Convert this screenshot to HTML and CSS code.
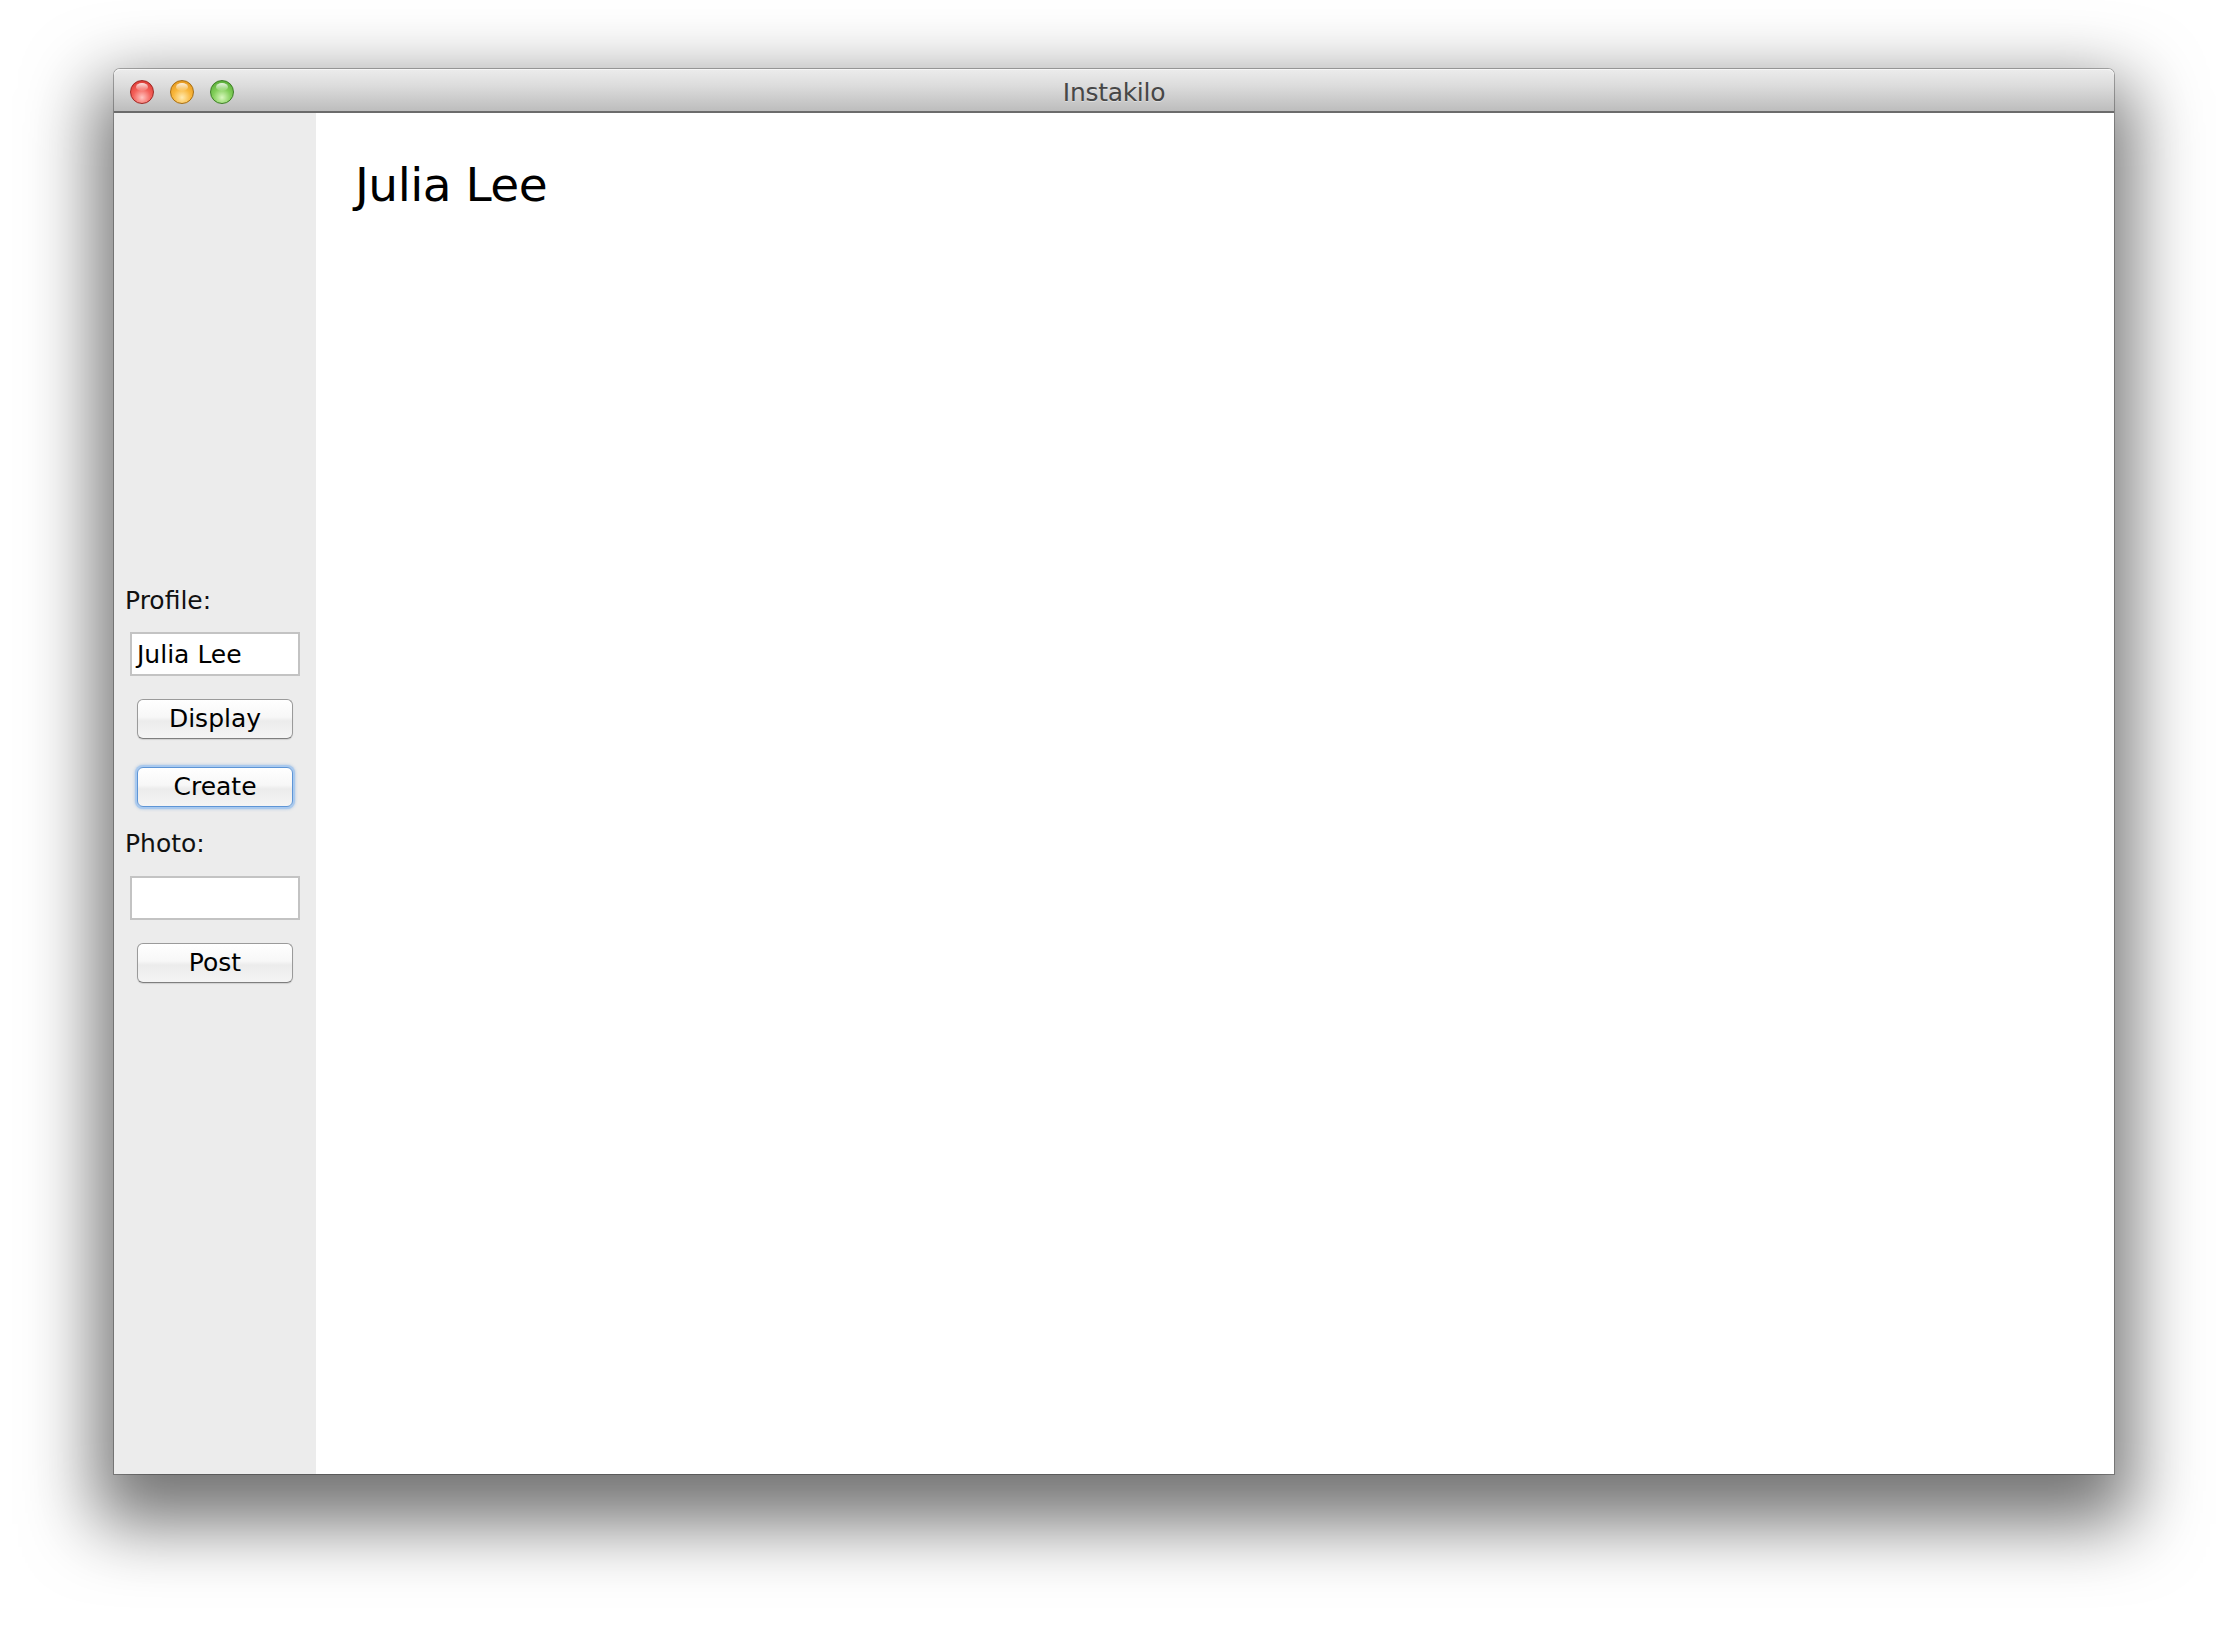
FILE: index.html
```html
<!DOCTYPE html>
<html>
<head>
<meta charset="utf-8">
<title>Instakilo</title>
<link rel="stylesheet" href="styles.css">
</head>
<body>
<div class="window">
  <div class="titlebar">
    <div class="lights">
      <span class="light red"></span>
      <span class="light yellow"></span>
      <span class="light green"></span>
    </div>
    <div class="title">Instakilo</div>
  </div>
  <div class="body">
    <div class="sidebar">
      <div class="label">Profile:</div>
      <div class="field field-profile">Julia Lee</div>
      <div class="btn btn-display">Display</div>
      <div class="btn btn-focus btn-create">Create</div>
      <div class="label label-photo">Photo:</div>
      <div class="field field-photo"></div>
      <div class="btn btn-post">Post</div>
    </div>
    <div class="main">
      <h1 class="heading">Julia Lee</h1>
    </div>
  </div>
</div>
</body>
</html>
```
FILE: styles.css
```css
html, body {
  margin: 0;
  padding: 0;
  background: #ffffff;
}
body {
  min-height: 1632px;
  box-sizing: border-box;
  padding: 69px 0 0 114px;
  font-family: "DejaVu Sans", "Liberation Sans", sans-serif;
}
.window {
  width: 2000px;
  height: 1405px;
  display: flex;
  flex-direction: column;
  border-radius: 6px 6px 0 0;
  box-shadow: 0 32px 70px 18px rgba(0,0,0,0.55), 0 0 0 1px rgba(0,0,0,0.28);
  background: #ffffff;
}
.titlebar {
  position: relative;
  height: 42px;
  flex: 0 0 42px;
  border-bottom: 2px solid #6b6b6b;
  border-radius: 6px 6px 0 0;
  background: linear-gradient(to bottom, #ececec 0%, #dcdcdc 40%, #bdbdbd 100%);
  box-shadow: inset 0 1px 0 #f6f6f6;
  display: flex;
  align-items: center;
  justify-content: center;
}
.lights {
  position: absolute;
  left: 16px;
  top: 11px;
  display: flex;
  gap: 16px;
}
.light {
  width: 24px;
  height: 24px;
  border-radius: 50%;
  box-sizing: border-box;
  position: relative;
}
.light::after {
  content: "";
  position: absolute;
  left: 5px;
  top: 2px;
  width: 12px;
  height: 8px;
  border-radius: 50%;
  background: linear-gradient(to bottom, rgba(255,255,255,0.85), rgba(255,255,255,0.05));
}
.red {
  background: radial-gradient(circle at 50% 75%, #ffc4c0 0%, #f4615a 45%, #d42c27 100%);
  border: 1px solid #9e2824;
}
.yellow {
  background: radial-gradient(circle at 50% 75%, #ffeab0 0%, #f9b73c 45%, #df8d12 100%);
  border: 1px solid #a66e14;
}
.green {
  background: radial-gradient(circle at 50% 75%, #d8f7bd 0%, #83cf5a 45%, #4aa12c 100%);
  border: 1px solid #3d7f26;
}
.title {
  font-size: 25px;
  color: #474747;
  letter-spacing: -0.3px;
  text-shadow: 0 1px 0 rgba(255,255,255,0.4);
  margin-top: 4px;
}
.body {
  flex: 1;
  display: flex;
}
.sidebar {
  width: 202px;
  flex: 0 0 202px;
  background: #ececec;
  display: flex;
  flex-direction: column;
  justify-content: center;
  align-items: center;
  padding-bottom: 17px;
  box-sizing: border-box;
}
.label {
  align-self: flex-start;
  margin-left: 11px;
  font-size: 25px;
  line-height: 28px;
  color: #111;
}
.field {
  width: 170px;
  height: 44px;
  box-sizing: border-box;
  border: 2px solid #c3c3c3;
  background: #ffffff;
  font-size: 25px;
  line-height: 42px;
  padding: 0 5px;
  color: #000;
}
.field-profile { margin-top: 17px; }
.field-photo { margin-top: 18px; }
.btn {
  width: 156px;
  height: 40px;
  box-sizing: border-box;
  border: 1px solid #9a9a9a;
  border-bottom-color: #7e7e7e;
  border-radius: 6px;
  background: linear-gradient(to bottom, #ffffff 0%, #f7f7f7 45%, #ececec 55%, #f4f4f4 100%);
  box-shadow: 0 1px 1px rgba(0,0,0,0.12);
  font-size: 25px;
  line-height: 37px;
  text-align: center;
  color: #000;
}
.btn-display { margin-top: 23px; }
.btn-create { margin-top: 28px; }
.btn-post { margin-top: 23px; }
.label-photo { margin-top: 23px; }
.btn-focus {
  border: 1px solid #5e95d6;
  box-shadow: 0 0 0 2px #a9c9ee, 0 0 3px 2px rgba(90,150,220,0.5);
}
.main {
  flex: 1;
  background: #ffffff;
  padding: 0 0 0 39px;
}
.heading {
  margin: 0;
  padding-top: 44px;
  font-weight: normal;
  font-size: 47px;
  line-height: 56px;
  color: #000;
  letter-spacing: -0.5px;
}
```
